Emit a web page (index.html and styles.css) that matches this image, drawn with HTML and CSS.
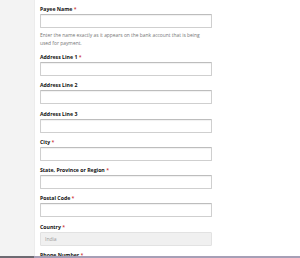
FILE: index.html
```html
<!DOCTYPE html>
<html lang="en">
<head>
	<meta charset="UTF-8">
	<title>Payee details</title>
	<link rel="stylesheet" href="styles.css">
</head>
<body>
	<div class="page">
		<div class="side"></div>
		<div class="main">
			<div class="field field-help">
				<label class="label">Payee Name <span class="req">*</span></label>
				<div class="input"></div>
				<p class="help">Enter the name exactly as it appears on the bank account that is being used for payment.</p>
			</div>
			<div class="field">
				<label class="label">Address Line 1 <span class="req">*</span></label>
				<div class="input"></div>
			</div>
			<div class="field">
				<label class="label">Address Line 2</label>
				<div class="input"></div>
			</div>
			<div class="field">
				<label class="label">Address Line 3</label>
				<div class="input"></div>
			</div>
			<div class="field">
				<label class="label">City <span class="req">*</span></label>
				<div class="input"></div>
			</div>
			<div class="field">
				<label class="label">State, Province or Region <span class="req">*</span></label>
				<div class="input"></div>
			</div>
			<div class="field">
				<label class="label">Postal Code <span class="req">*</span></label>
				<div class="input"></div>
			</div>
			<div class="field">
				<label class="label">Country <span class="req">*</span></label>
				<div class="input input-off">India</div>
			</div>
			<div class="field">
				<label class="label">Phone Number <span class="req">*</span></label>
				<div class="input"></div>
			</div>
		</div>
	</div>
	<div class="taskbar">
		<span class="task-left"></span>
	</div>
</body>
</html>
```

FILE: styles.css
```css
html, body{
	margin: 0;
	padding: 0;
	height: 100%;
	overflow: hidden;
	background: #fff;
	font-family: "Open Sans", "Liberation Sans", sans-serif;
}
.page{
	display: flex;
	min-height: 100%;
}
.side{
	width: 34px;
	flex: none;
	background-color: #f3f3f3;
	border-right: 1px solid #ececec;
}
.main{
	padding: 6px 0 0 5px;
}
.field{
	margin-bottom: 6.3px;
}
.field-help{
	margin-bottom: 7px;
}
.label{
	display: block;
	font-size: 5.2px;
	line-height: 7px;
	font-weight: bold;
	color: #111;
	margin-bottom: 1px;
}
.req{
	color: #c40000;
	font-weight: normal;
}
.input{
	box-sizing: border-box;
	width: 172px;
	height: 14px;
	border: 1px solid #cfcfcf;
	border-top-color: #bdbdbd;
	border-radius: 1px;
	box-shadow: inset 0 1px 1px rgba(0,0,0,0.06);
	font-size: 5px;
	line-height: 12px;
	padding-left: 4px;
	color: #999;
}
.input-off{
	background-color: #f0f0f0;
	border-color: #e2e2e2;
	box-shadow: none;
}
.help{
	width: 166px;
	margin: 3px 0 0;
	font-size: 4.9px;
	line-height: 8px;
	color: #767676;
}
.taskbar{
	position: fixed;
	left: 0;
	right: 0;
	bottom: 0;
	height: 2px;
	background-color: #a69fb6;
}
.task-left{
	display: block;
	width: 34px;
	height: 2px;
	background-color: #6d6a72;
}
```
